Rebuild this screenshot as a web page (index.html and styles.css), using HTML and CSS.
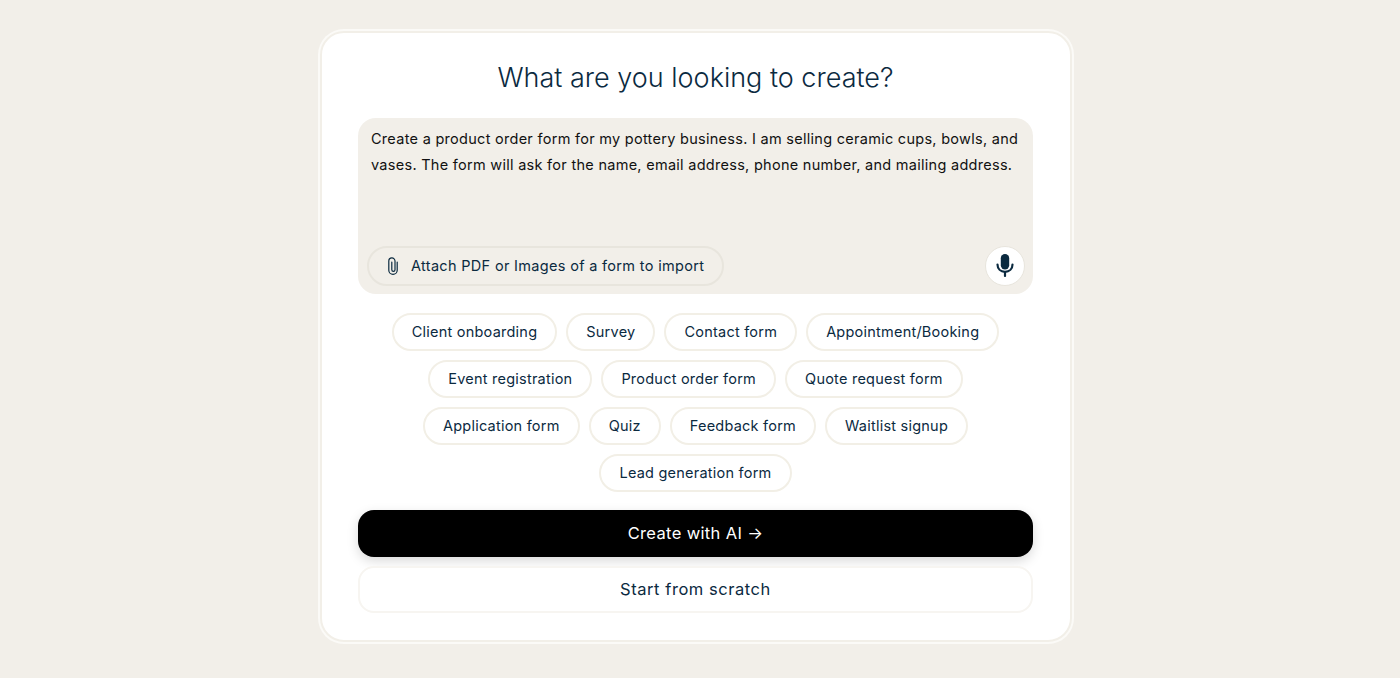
FILE: index.html
```html
<!DOCTYPE html>
<html lang="en">
<head>
<meta charset="utf-8">
<title>What are you looking to create?</title>
<link rel="stylesheet" href="styles.css">
</head>
<body>
<main class="card">
  <h1 class="title">What are you looking to create?</h1>
  <div class="prompt">
    <p class="prompt-text">Create a product order form for my pottery business. I am selling ceramic cups, bowls, and vases. The form will ask for the name, email address, phone number, and mailing address.</p>
    <div class="prompt-actions">
      <button class="attach" type="button">
        <svg class="clip" viewBox="0 0 10 18" width="10" height="18" fill="none" stroke="#0b2a3f" stroke-width="1.2" stroke-linecap="round"><path d="M9.2 5v8.2a4.2 4.2 0 0 1-8.4 0V4a3.1 3.1 0 0 1 6.2 0v8.8a1.6 1.6 0 0 1-3.2 0V5"/></svg>
        <span>Attach PDF or Images of a form to import</span>
      </button>
      <button class="mic" type="button" aria-label="Dictate">
        <svg viewBox="0 0 20 26" width="20" height="26" fill="#0b2a3f"><rect x="5.8" y="1" width="8.4" height="15.5" rx="4.2"/><path d="M2.5 11.5c0 4.4 3.2 7.3 7.5 7.3s7.500-2.900 7.500-7.300" fill="none" stroke="#0b2a3f" stroke-width="2.2" stroke-linecap="round"/><rect x="8.900" y="18" width="2.200" height="6" rx="1"/></svg>
      </button>
    </div>
  </div>
  <div class="chips">
    <div class="chip-row">
      <button class="chip" type="button">Client onboarding</button>
      <button class="chip" type="button">Survey</button>
      <button class="chip" type="button">Contact form</button>
      <button class="chip" type="button">Appointment/Booking</button>
    </div>
    <div class="chip-row">
      <button class="chip" type="button">Event registration</button>
      <button class="chip" type="button">Product order form</button>
      <button class="chip" type="button">Quote request form</button>
    </div>
    <div class="chip-row">
      <button class="chip" type="button">Application form</button>
      <button class="chip" type="button">Quiz</button>
      <button class="chip" type="button">Feedback form</button>
      <button class="chip" type="button">Waitlist signup</button>
    </div>
    <div class="chip-row">
      <button class="chip" type="button">Lead generation form</button>
    </div>
  </div>
  <div class="actions">
    <button class="btn btn-primary" type="button">Create with AI →</button>
    <button class="btn btn-secondary" type="button">Start from scratch</button>
  </div>
</main>
</body>
</html>
```
FILE: styles.css
```css
* { box-sizing: border-box; }
html, body { height: 100%; }
body {
  margin: 0;
  background: #f2efe9;
  display: flex;
  align-items: flex-start;
  justify-content: center;
  padding: 31px 0 0 0;
  font-family: "Inter", "Liberation Sans", sans-serif;
  color: #0b2a3f;
}
button { font-family: inherit; color: inherit; cursor: pointer; }
.card {
  width: 752px;
  height: 611px;
  margin-right: 8px;
  background: #fff;
  border: 2px solid #f2efe8;
  border-radius: 24px;
  box-shadow: 0 0 0 2px #fbfaf7;
  padding: 0 37px 0 36px;
}
.title {
  margin: 25px 0 0;
  height: 40px;
  text-align: center;
  font-size: 27px;
  line-height: 40px;
  font-weight: 300;
  color: #0b2a3f;
}
.prompt {
  margin-top: 20px;
  height: 176px;
  background: #f2efe9;
  border-radius: 18px;
  padding: 8px 8px 8px 13px;
  display: flex;
  flex-direction: column;
  justify-content: space-between;
}
.prompt-text {
  margin: 0;
  font-size: 14.5px;
  line-height: 26px;
  color: #111;
  letter-spacing: 0.28px;
}
.prompt-actions {
  margin-left: -4px;
  display: flex;
  align-items: center;
  justify-content: space-between;
}
.attach {
  height: 40px;
  width: 357px;
  display: flex;
  align-items: center;
  gap: 13px;
  padding: 0 16px 2px 19px;
  background: transparent;
  border: 2px solid #e8e5dd;
  border-radius: 20px;
  font-size: 14.5px;
  letter-spacing: 0.32px;
  white-space: nowrap;
}
.clip { flex: none; margin-top: 2px; }
.mic {
  width: 40px;
  height: 40px;
  border-radius: 50%;
  border: 1px solid #e8e5dd;
  background: #fff;
  display: flex;
  align-items: center;
  justify-content: center;
  padding: 0;
}
.chips {
  margin-top: 19px;
  display: flex;
  flex-direction: column;
  gap: 9px;
}
.chip-row {
  display: flex;
  justify-content: center;
  gap: 9px;
}
.chip {
  height: 38px;
  padding: 0 18px 2px;
  background: #fff;
  border: 2px solid #f2efe6;
  border-radius: 19px;
  font-size: 14.5px;
  letter-spacing: 0.23px;
  white-space: nowrap;
}
.actions {
  margin-top: 18px;
  display: flex;
  flex-direction: column;
  gap: 9px;
}
.btn {
  height: 47px;
  padding-bottom: 2px;
  border-radius: 16px;
  font-size: 16.5px;
  letter-spacing: 0.55px;
}
.btn-primary {
  background: #000;
  color: #fff;
  border: 0;
  letter-spacing: 0.35px;
  box-shadow: 0 4px 12px rgba(0,0,0,.15);
}
.btn-secondary {
  background: #fff;
  border: 2px solid #f7f5f1;
}
```
